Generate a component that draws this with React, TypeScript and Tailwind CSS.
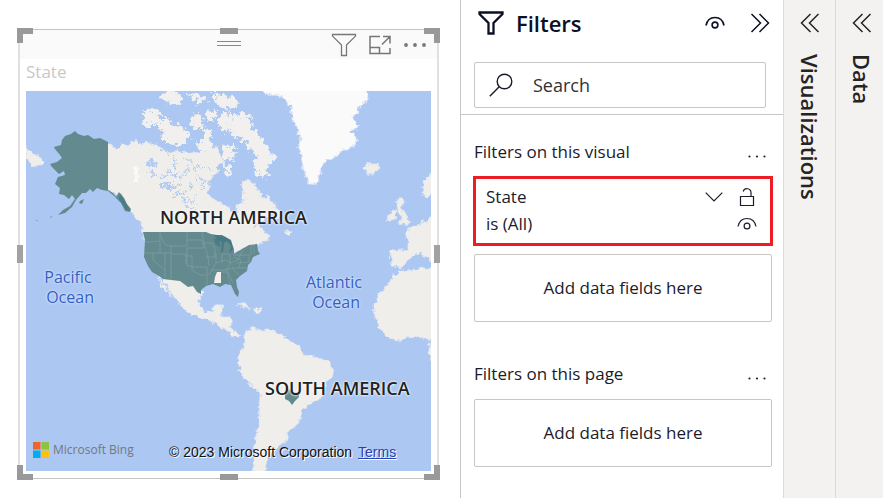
import type { ReactNode } from "react";

const uiFont = "font-['Segoe_UI','Open_Sans','Noto_Sans',sans-serif]";

function FunnelIcon({ className, strokeWidth }: { className: string; strokeWidth: number }) {
  return (
    <svg viewBox="0 0 26 24" className={className} fill="none" stroke="currentColor" strokeWidth={strokeWidth} aria-hidden="true">
      <path d="M1.5 1.5h23v1.6L15.5 12v10.5h-5V12L1.5 3.1z" />
    </svg>
  );
}

function EyeIcon({ className, strokeWidth }: { className: string; strokeWidth: number }) {
  return (
    <svg viewBox="0 0 20 14" className={className} fill="none" stroke="currentColor" strokeWidth={strokeWidth} aria-hidden="true">
      <path d="M1 9.5C2 4.5 5.500 1.500 10 1.500S18 4.500 19 9.500" />
      <circle cx="10" cy="9" r="2.900" />
    </svg>
  );
}

function DoubleChevron({ left = false }: { left?: boolean }) {
  return (
    <svg viewBox="0 0 20 20" className="block h-5 w-5" fill="none" stroke="currentColor" strokeWidth="1.500" aria-hidden="true">
      {left ? <path d="M10.500 1L1.500 10l9 9M18.500 1l-9 9 9 9" /> : <path d="M1.500 1l9 9-9 9M9.500 1l9 9-9 9" />}
    </svg>
  );
}

function DotsIcon({ className, r }: { className: string; r: number }) {
  return (
    <svg viewBox="0 0 24 6" className={className} fill="currentColor" aria-hidden="true">
      <circle cx="3" cy="3" r={r} />
      <circle cx="12" cy="3" r={r} />
      <circle cx="21" cy="3" r={r} />
    </svg>
  );
}

function ResizeHandles() {
  return (
    <div className="pointer-events-none absolute -inset-x-[3px] -inset-y-[2px]" aria-hidden="true">
      <i className="absolute left-0 top-0 h-[15px] w-4 border-l-[6px] border-t-[6px] border-[#999]" />
      <i className="absolute right-0 top-0 h-[15px] w-4 border-r-[6px] border-t-[6px] border-[#999]" />
      <i className="absolute bottom-0 left-0 h-[15px] w-4 border-b-[6px] border-l-[6px] border-[#999]" />
      <i className="absolute bottom-0 right-0 h-[15px] w-4 border-b-[6px] border-r-[6px] border-[#999]" />
      <i className="absolute left-1/2 top-0 h-[6px] w-[18px] -translate-x-1/2 bg-[#999]" />
      <i className="absolute bottom-0 left-1/2 h-[6px] w-[18px] -translate-x-1/2 bg-[#999]" />
      <i className="absolute left-0 top-1/2 h-[18px] w-[6px] -translate-y-1/2 bg-[#a2a2a2]" />
      <i className="absolute right-0 top-1/2 h-[18px] w-[6px] -translate-y-1/2 bg-[#a2a2a2]" />
    </div>
  );
}

function MapDrawing() {
  return (
    <svg viewBox="26 91 405 380" preserveAspectRatio="xMidYMid slice" className="block h-full w-full" role="img" aria-label="Filled map of states">
      <defs>
        <filter id="coast" x="-5%" y="-5%" width="110%" height="110%">
          <feTurbulence type="fractalNoise" baseFrequency="0.2" numOctaves="3" seed="4" />
          <feDisplacementMap in="SourceGraphic" scale="7" xChannelSelector="R" yChannelSelector="G" />
          <feGaussianBlur stdDeviation="0.400" />
        </filter>
        <filter id="arctic" x="-5%" y="-5%" width="110%" height="110%">
          <feTurbulence type="fractalNoise" baseFrequency="0.22" numOctaves="3" seed="9" />
          <feDisplacementMap in="SourceGraphic" scale="14" xChannelSelector="R" yChannelSelector="G" />
          <feGaussianBlur stdDeviation="0.500" />
        </filter>
      </defs>
      <rect x="26" y="91" width="405" height="380" fill="#abc7f2" />

      {/* Continents */}
      <g fill="#efeeeb" stroke="#dfe5ef" strokeWidth="0.8" filter="url(#coast)">
        <path d="M100 141L108 142L117 149L122 144L128 146L135 140L140 144L147 142L157 146L164 151L172 152L182 151L190 154L203 153L209 148L217 147L220 154L224 161L217 165L220 171L213 176L209 183L208 194L214 199L221 204L229 207L232 213L237 212L237 205L244 201L243 190L241 182L247 180L254 183L259 190L262 197L268 196L271 202L276 205L275 212L266 218L258 222L252 229L260 225L263 231L270 236L268 241L259 244L245 249L232 252L206 240L144 240L143 228L137 219L131 211L120 194L104 190Z" />
        <path d="M158 276L166 284L170 292L178 301L185 310L197 317L206 319L213 321L220 327L228 330L233 336L240 337L237 333L231 328L231 317L221 317L221 308L223 305L216 305L212 313L205 312L199 304L202 292L193 280Z" />
        <path d="M159 279L166 288L172 297L169 294L161 286Z" />
        <path d="M245 333L253 328L261 330L270 330L282 335L290 341L299 345L303 355L312 356L321 358L330 363L334 370L329 380L323 388L321 398L312 403L303 408L300 419L294 428L286 432L288 440L282 445L274 448L270 456L266 464L264 480L253 480L254 458L255 440L259 421L260 393L249 384L241 372L237 362L241 350L245 342Z" />
        <path d="M393 276L402 271L412 270L422 268L440 268V365L431 360L428 350L431 340L420 337L410 336L397 341L385 335L378 326L375 316L374 303L379 293L385 289Z" />
        <path d="M390 251L398 249L408 251L408 240L405 237L410 228L418 226L440 209V263L430 260L419 253L410 257L406 264L400 268L391 265Z" />
        <path d="M398 197L404 201L402 208L409 217L408 223L398 225L402 218L398 212L397 204Z" />
        <path d="M390 212L396 210L395 219L388 221Z" />
        <path d="M434 170L424 181L422 192L427 198L434 192Z" />
        <path d="M363 168L369 164L378 164L379 170L371 175L365 171Z" />
        <path d="M26 147L31 153L39 156L43 163L37 167L31 164L26 161Z" />
        <path d="M237 303L246 304L251 309L242 306ZM253 309L263 310L260 313L254 312ZM283 231L293 232L289 236Z" />
        <path d="M273 206L281 212L277 218L272 213Z" />
      </g>
      {/* Arctic archipelago */}
      <g fill="#f1f0ee" filter="url(#arctic)">
        <path d="M145 112L152 108L161 113L158 121L149 129L142 124Z" />
        <path d="M159 119L169 119L178 126L184 126L190 138L181 146L169 144L159 137L163 130L156 126Z" />
        <path d="M163 92L174 92L183 99L179 106L169 104L161 98Z" />
        <path d="M193 114L202 115L203 126L196 130L191 123ZM203 127L211 131L211 141L203 142Z" />
        <path d="M205 110L215 111L214 120L206 121ZM186 92L199 94L206 100L196 103Z" />
        <path d="M213 98L233 96L239 103L229 110L217 105Z" />
        <path d="M219 114L228 113L231 123L225 134L219 127ZM198 141L210 141L214 152L199 154ZM212 92L222 92L222 96L213 96Z" />
        <path d="M230 113L241 117L252 126L258 135L266 142L271 153L276 159L268 167L266 178L256 173L252 163L258 158L250 150L246 141L234 137L229 129Z" />
        <path d="M223 144L234 147L235 157L226 161L222 155ZM224 164L233 169L230 176L225 173Z" />
        <path d="M238 112L249 115L251 124L243 124Z" />
      </g>
      {/* Greenland */}
      <g filter="url(#coast)">
        <path fill="#fafafa" stroke="#dde7f5" d="M258 86L265 93L273 95L284 97L290 107L292 118L297 127L300 138L299 148L302 160L304 171L308 184L317 184L320 173L322 163L332 158L344 150L355 145L357 137L350 131L359 127L352 119L360 107L367 99L366 86Z" />
      </g>
      {/* Northern lakes */}
      <g fill="none" stroke="#b3cbf1" strokeWidth="1.500" filter="url(#arctic)">
        <path strokeWidth="4" d="M146 161L157 164M160 184L170 185" />
        <path d="M148 170L160 178L168 172L178 177M166 189L180 185L181 174L190 168M174 196L187 191L193 184M182 200L193 202L198 192M196 177L203 180L202 190M193 168L205 166L211 169M186 206L196 210M169 154L177 160L174 168M184 157L190 163" />
      </g>
      <path fill="#fff" opacity="0.700" filter="url(#coast)" d="M134 167L138 168L139 180L134 181Z" />

      {/* Highlighted regions */}
      <g fill="#628a8f">
        <path d="M75 131L78 134L84 136L88 135L94 139L100 138L104 140L108 142V190L113 193L116 197L119 192L124 198L127 204L131 209L130 212L125 211L121 203L114 196L108 191L102 190L97 188L93 192L90 189L86 193L82 193L76 200L72 207L65 213L58 215L63 210L70 206L75 199L72 195L69 199L64 195L59 194L60 188L55 184L58 177L65 175L64 171L59 174L52 167L50 164L57 162L62 158L60 155L55 149L54 147L61 145L62 140L65 136L71 134Z" />
        <path d="M80 201l4-2-2 5-3-1zM50 217l3-1-3 2zM37 220l1 1h-2z" />
        <path d="M143 232H206L211 234L217 235L225 237L231 241L234 249L234 254L242 249L249 245L257 244L258 251L260 254L253 257L251 262L248 265L247 271L240 276L236 280L237 287L239 292L238 297L235 294L231 285L225 284L220 287L213 284L206 286L201 290L201 294L197 292L193 286L188 287L180 281L171 280L163 279L159 276L152 272L148 266L144 257L145 240Z" />
        <path d="M285 393L289 389L292 392L299 393L299 397L295 401L292 405L289 401L285 399Z" />
      </g>
      <g fill="#437883">
        <path opacity="0.900" d="M214 235L222 235L231 240L233 249L229 254L231 246L227 241L224 243L223 252L221 252L222 242L217 240Z" />
        <path opacity="0.700" d="M120 194L124 199L130 211L126 210L119 199ZM213 238L219 240L221 247L216 245Z" />
      </g>
      <path fill="#f1f0ec" d="M217 272L221 272L221 283L214 283L215 277Z" />
      <g fill="none" stroke="#8fa9a4" strokeWidth="0.600" opacity="0.800">
        <path d="M145 242L151 242L160 241L160 232M160 241L160 253H144M153 253V260L165 270V278M160 253H171V246H187V232M161 236L165 245L171 246M165 253V270M171 253V280M171 254H186V264M187 240H202L204 248H187M187 248V266H192V270L200 275H207V285M186 256H192V267H207V275M202 232L204 243L208 257L209 266M203 243H212L215 249V257H206M216 253V263L211 272L208 275M216 263L225 260L231 263L226 270H210M222 254V263M222 254H230V263L238 260L243 250M233 255H249V262L236 263M226 270L232 268L247 268M221 272H227L230 284M232 268L239 275M251 245V255M254 244V254M227 270L233 283M234 257L241 260L239 268" />
      </g>
    </svg>
  );
}

function MapLabel({ className, children }: { className: string; children: ReactNode }) {
  return <span className={`absolute whitespace-nowrap ${className}`}>{children}</span>;
}

const halo = "[text-shadow:0_0_2px_#fff,0_0_3px_#fff]";
const seaHalo = "[text-shadow:0_0_2px_#dce8fb,0_0_3px_#dce8fb]";

function MapVisual() {
  return (
    <section className="relative ml-[18px] mr-[21px] mt-[29px] border-x-2 border-y border-x-[#e0e0e0] border-y-[#c4c4c4] bg-white pb-[7px]">
      <header className="relative flex h-[29px] items-center justify-end gap-3 bg-[#fafafa] pr-[10px] text-[#777]">
        <span className="absolute left-1/2 top-[11px] h-[5px] w-6 -translate-x-1/2 border-y border-[#888]" />
        <button type="button" aria-label="Filters affecting this visual">
          <FunnelIcon className="block h-6 w-[26px]" strokeWidth={1.3} />
        </button>
        <button type="button" aria-label="Focus mode">
          <svg viewBox="0 0 22 20" className="block h-5 w-[22px]" fill="none" stroke="currentColor" strokeWidth="1.500" aria-hidden="true">
            <path d="M11 1.500H1v17h20v-5.500M1 12.500h9.500v6M10.500 12.500V18M13 9.500l7.500-7.500M14 1.500h7v7" />
          </svg>
        </button>
        <button type="button" aria-label="More options">
          <DotsIcon className="block h-[6px] w-6" r={1.9} />
        </button>
      </header>
      <h2 className="h-8 px-[6px] text-[17px] leading-[26px] text-[#c8c8c8]">State</h2>
      <div className="relative mx-[6px] h-[380px] overflow-hidden">
        <MapDrawing />
        <MapLabel className={`left-[134px] top-[114px] text-lg font-semibold leading-6 text-[#222] ${halo}`}>NORTH AMERICA</MapLabel>
        <MapLabel className={`left-[239px] top-[285px] text-lg font-semibold leading-6 text-[#222] ${halo}`}>SOUTH AMERICA</MapLabel>
        <MapLabel className={`left-4 top-[176px] text-center text-base font-medium leading-5 text-[#355fc4] ${seaHalo}`}>
          Pacific
          <br />
          &nbsp;Ocean
        </MapLabel>
        <MapLabel className={`left-[280px] top-[181px] text-center text-base font-medium leading-5 text-[#355fc4] ${seaHalo}`}>
          Atlantic
          <br />
          &nbsp;Ocean
        </MapLabel>
        <div className="absolute inset-x-[7px] bottom-[9px] flex h-6 items-center">
          <svg viewBox="0 0 16 16" className="h-4 w-4" aria-hidden="true">
            <path fill="#f1632a" d="M0 0h7.500v7.500H0z" />
            <path fill="#8bc53f" d="M8.500 0H16v7.500H8.500z" />
            <path fill="#00adef" d="M0 8.500h7.500V16H0z" />
            <path fill="#fdc010" d="M8.500 8.500H16V16H8.500z" />
          </svg>
          <span className="ml-1 w-[116px] text-xs font-medium text-[#747981]">Microsoft Bing</span>
          <span className="mt-1 whitespace-nowrap font-['Liberation_Sans',Arial,sans-serif] text-sm text-[#111] [text-shadow:1px_1px_0_#fff]">
            © 2023 Microsoft Corporation
          </span>
          <a href="#terms" className="ml-[6px] mt-1 font-['Liberation_Sans',Arial,sans-serif] text-sm text-[#2742b5] underline [text-shadow:1px_1px_0_#fff]">
            Terms
          </a>
        </div>
      </div>
      <ResizeHandles />
    </section>
  );
}

function SectionHeading({ children }: { children: ReactNode }) {
  return (
    <div className="flex h-6 items-center justify-between pr-[5px]">
      <h3 className="text-[17px] leading-6">{children}</h3>
      <button type="button" aria-label={`More options for ${children}`} className="pt-2">
        <DotsIcon className="block h-[5px] w-5" r={1.3} />
      </button>
    </div>
  );
}

function DropZone() {
  return (
    <button type="button" className="block h-[68px] w-full rounded-xs border border-[#c8c6c4] text-[17px]">
      Add data fields here
    </button>
  );
}

function FiltersPane() {
  return (
    <aside className="w-[323px] shrink-0 border-l border-[#c8c6c4] bg-white text-[#1b1b2b]">
      <div className="border-b border-[#c8c6c4] px-[13px] pb-[6px]">
        <header className="flex h-[46px] items-center pl-1 text-[#0b1026]">
          <FunnelIcon className="h-6 w-[26px]" strokeWidth={2.3} />
          <h2 className="ml-3 flex-1 text-[22px] font-semibold leading-8">Filters</h2>
          <button type="button" aria-label="Show or hide pane" className="mr-[25px]">
            <EyeIcon className="block h-[14px] w-5" strokeWidth={1.6} />
          </button>
          <button type="button" aria-label="Collapse filters">
            <DoubleChevron />
          </button>
        </header>
        <label className="mr-1 mt-4 flex h-[46px] items-center rounded-xs border border-[#c8c6c4] pb-px pl-[14px]">
          <svg viewBox="0 0 24 24" className="h-6 w-6 shrink-0" fill="none" stroke="currentColor" strokeWidth="1.400" aria-hidden="true">
            <circle cx="15.500" cy="8.500" r="7.300" />
            <path d="M10.200 13.700L.8 23.200" />
          </svg>
          <input type="text" aria-label="Search" placeholder="Search" className="ml-5 min-w-0 flex-1 bg-transparent text-lg outline-none placeholder:text-[#333]" />
        </label>
      </div>
      <div className="pl-3 pr-[10px] pt-[25px]">
        <div className="px-px">
          <SectionHeading>Filters on this visual</SectionHeading>
        </div>
        <article className="mt-3 flex h-[70px] justify-between border-3 border-[#ee1c25] pl-[10px] pr-[13px] pt-1">
          <div className="text-[17px] leading-[27px]">
            <h4>State</h4>
            <p>is (All)</p>
          </div>
          <div className="grid grid-cols-[20px_20px] grid-rows-[27px_27px] items-center gap-x-[14px]">
            <button type="button" aria-label="Expand filter card" className="justify-self-end">
              <svg viewBox="0 0 18 10" className="block h-[10px] w-[18px]" fill="none" stroke="currentColor" strokeWidth="1.200" aria-hidden="true">
                <path d="M.7.7L9 9l8.300-8.300" />
              </svg>
            </button>
            <button type="button" aria-label="Lock filter" className="justify-self-center">
              <svg viewBox="0 0 16 20" className="block h-5 w-4" fill="none" stroke="currentColor" strokeWidth="1.200" aria-hidden="true">
                <path d="M1.500 9.500h13v9h-13zM12 9.500V5.500a4 4 0 0 0-7.800-1" />
              </svg>
            </button>
            <button type="button" aria-label="Hide filter" className="col-start-2">
              <EyeIcon className="block h-[14px] w-5" strokeWidth={1.2} />
            </button>
          </div>
        </article>
        <div className="px-px pt-2">
          <DropZone />
          <div className="mb-[13px] mt-10">
            <SectionHeading>Filters on this page</SectionHeading>
          </div>
          <DropZone />
        </div>
      </div>
    </aside>
  );
}

function CollapsedPane({ title, className }: { title: string; className: string }) {
  return (
    <aside className={`flex shrink-0 flex-col items-center border-l border-[#dddbd9] bg-[#f3f2f1] pt-[13px] text-[#252423] ${className}`}>
      <button type="button" aria-label={`Expand ${title}`}>
        <DoubleChevron left />
      </button>
      <h2 className="mt-[21px] text-[22px] font-semibold leading-7 [writing-mode:vertical-rl]">{title}</h2>
    </aside>
  );
}

export default function App() {
  return (
    <div className={`flex min-h-screen bg-white ${uiFont}`}>
      <main className="min-w-0 flex-1">
        <MapVisual />
      </main>
      <FiltersPane />
      <CollapsedPane title="Visualizations" className="w-[52px]" />
      <CollapsedPane title="Data" className="w-12 pl-1" />
    </div>
  );
}
